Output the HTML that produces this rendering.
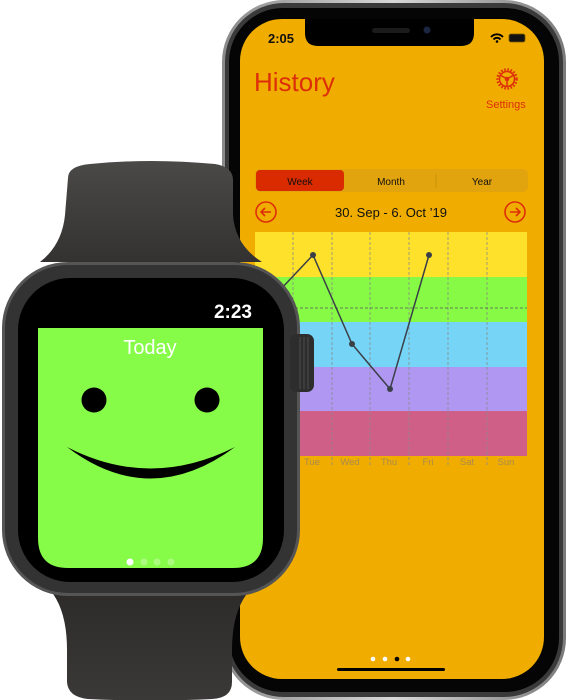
<!DOCTYPE html>
<html><head><meta charset="utf-8"><style>
html,body{margin:0;padding:0;background:#fff;width:567px;height:700px;overflow:hidden}
svg{display:block}
text{font-family:"Liberation Sans",sans-serif}
</style></head><body>
<svg width="567" height="700" viewBox="0 0 567 700" xmlns="http://www.w3.org/2000/svg">
<defs>
<linearGradient id="strap" x1="0" y1="0" x2="0" y2="1"><stop offset="0" stop-color="#4a4948"/><stop offset="1" stop-color="#333231"/></linearGradient>
<linearGradient id="strapb" x1="0" y1="0" x2="0" y2="1"><stop offset="0" stop-color="#2c2b2a"/><stop offset="1" stop-color="#3a3938"/></linearGradient>
<linearGradient id="frame" x1="0" y1="0" x2="1" y2="0"><stop offset="0" stop-color="#8a8a8a"/><stop offset="0.5" stop-color="#d8d8d8"/><stop offset="1" stop-color="#7a7a7a"/></linearGradient>
<clipPath id="scr"><rect x="240" y="19" width="304" height="660" rx="42"/></clipPath>
</defs>

<!-- PHONE -->
<rect x="222" y="0" width="344" height="700" rx="62" fill="url(#frame)"/>
<rect x="225" y="3" width="338" height="694" rx="59" fill="#3a3a3a"/>
<rect x="229" y="8" width="330" height="684" rx="54" fill="#050505"/>
<g clip-path="url(#scr)">
<rect x="240" y="19" width="304" height="660" fill="#F0AD00"/>
<path d="M305 19 H474 V33 Q474 46 461 46 H318 Q305 46 305 33 Z" fill="#000"/>
<rect x="372" y="28" width="38" height="5" rx="2.5" fill="#1b1b1b"/>
<circle cx="427" cy="30" r="3.5" fill="#1a2540"/>
</g>
<text x="268" y="43" font-size="13" font-weight="bold" fill="#111">2:05</text>
<path d="M491 37 a8 8 0 0 1 12 0 M493.5 39.5 a4.5 4.5 0 0 1 7 0" stroke="#000" stroke-width="1.8" fill="none"/>
<circle cx="497" cy="41.5" r="1.3" fill="#000"/>
<rect x="509" y="34" width="16" height="8" rx="2" fill="#111" stroke="#7a5a00" stroke-width="0.8"/>

<text x="254" y="91" font-size="26" fill="#DD2E0A">History</text>
<g transform="translate(507,79)" stroke="#DD2E0A" fill="none" stroke-width="1.5">
<circle r="9.5" stroke-dasharray="1.6 1.6" stroke-width="2.5"/>
<circle r="7.5"/>
<path d="M0 0 L-6 -3.5 M0 0 L6 -3.5 M0 0 L0 7"/>
<circle r="1.5" fill="#DD2E0A"/>
</g>
<text x="486" y="108" font-size="11" fill="#DD2E0A">Settings</text>

<rect x="255" y="169" width="273" height="23" rx="5" fill="#E2A40E"/>
<rect x="256" y="170" width="88" height="21" rx="4" fill="#D92A00"/>
<line x1="436" y1="174" x2="436" y2="188" stroke="#c99305" stroke-width="1"/>
<text x="300" y="185" font-size="10" text-anchor="middle" fill="#111">Week</text>
<text x="391" y="185" font-size="10" text-anchor="middle" fill="#111">Month</text>
<text x="482" y="185" font-size="10" text-anchor="middle" fill="#111">Year</text>

<circle cx="266" cy="212" r="10" fill="none" stroke="#DD2E0A" stroke-width="1.6"/>
<path d="M271 212 H261 M265 208 L261 212 L265 216" stroke="#DD2E0A" stroke-width="1.6" fill="none"/>
<circle cx="515" cy="212" r="10" fill="none" stroke="#DD2E0A" stroke-width="1.6"/>
<path d="M510 212 H520 M516 208 L520 212 L516 216" stroke="#DD2E0A" stroke-width="1.6" fill="none"/>
<text x="391" y="217" font-size="13" text-anchor="middle" fill="#111">30. Sep - 6. Oct ’19</text>

<rect x="255" y="232" width="272" height="45" fill="#FEE12A"/>
<rect x="255" y="277" width="272" height="45" fill="#86FA45"/>
<rect x="255" y="322" width="272" height="45" fill="#76D5F6"/>
<rect x="255" y="367" width="272" height="44" fill="#B097F2"/>
<rect x="255" y="411" width="272" height="45" fill="#D05F87"/>
<g stroke="#8a8a8a" stroke-width="0.8" stroke-dasharray="3 2">
<line x1="293" y1="232" x2="293" y2="467"/><line x1="332" y1="232" x2="332" y2="467"/>
<line x1="370" y1="232" x2="370" y2="467"/><line x1="409" y1="232" x2="409" y2="467"/>
<line x1="448" y1="232" x2="448" y2="467"/><line x1="487" y1="232" x2="487" y2="467"/>
<line x1="255" y1="308" x2="527" y2="308" stroke="#555"/>
</g>
<polyline points="280,290 313,255 352,344 390,389 429,255" fill="none" stroke="#3a3f48" stroke-width="1.5"/>
<g fill="#3a3f48"><circle cx="313" cy="255" r="3"/><circle cx="352" cy="344" r="3"/><circle cx="390" cy="389" r="3"/><circle cx="429" cy="255" r="3"/></g>
<g font-size="9.5" fill="#A88A4E" text-anchor="middle">
<text x="312" y="465">Tue</text><text x="350" y="465">Wed</text><text x="389" y="465">Thu</text>
<text x="428" y="465">Fri</text><text x="467" y="465">Sat</text><text x="506" y="465">Sun</text>
</g>
<g fill="#fff"><circle cx="373" cy="659" r="2.3"/><circle cx="385" cy="659" r="2.3"/><circle cx="408" cy="659" r="2.3"/></g>
<circle cx="397" cy="659" r="2.3" fill="#000"/>
<rect x="337" y="668" width="108" height="3" rx="1.5" fill="#000"/>

<!-- WATCH straps -->
<path d="M68 178 Q68 166 90 164 Q150 158 215 164 Q233 167 233 180 L233 215 Q235 245 262 262 L40 262 Q62 245 65 215 Z" fill="url(#strap)"/>
<path d="M50 590 L250 590 Q232 610 232 650 L232 682 Q232 698 212 699 Q150 702 88 699 Q68 697 67 682 L67 650 Q67 610 50 590 Z" fill="url(#strapb)"/>
<!-- case -->
<rect x="2" y="262" width="298" height="334" rx="66" fill="#555"/>
<rect x="5" y="265" width="292" height="328" rx="63" fill="#333"/>
<rect x="18" y="278" width="266" height="304" rx="52" fill="#000"/>
<rect x="290" y="334" width="24" height="58" rx="7" fill="#2d2d2d"/>
<g stroke="#555" stroke-width="0.8"><line x1="300" y1="337" x2="300" y2="389"/><line x1="304" y1="337" x2="304" y2="389"/><line x1="308" y1="337" x2="308" y2="389"/></g>
<path d="M38 328 H263 V538 Q263 568 233 568 H68 Q38 568 38 538 Z" fill="#86FB48"/>
<text x="252" y="318" font-size="19" font-weight="bold" fill="#fff" text-anchor="end">2:23</text>
<text x="150" y="354" font-size="20" fill="#fff" text-anchor="middle">Today</text>
<circle cx="94" cy="400" r="12.5" fill="#000"/>
<circle cx="207" cy="400" r="12.5" fill="#000"/>
<path d="M67 447 Q150 510 235 447 Q150 490 67 447 Z" fill="#000"/>
<circle cx="130" cy="562" r="3.5" fill="#fff"/>
<g fill="#fff" opacity="0.3"><circle cx="144" cy="562" r="3.5"/><circle cx="157" cy="562" r="3.5"/><circle cx="171" cy="562" r="3.5"/></g>
</svg>
</body></html>
